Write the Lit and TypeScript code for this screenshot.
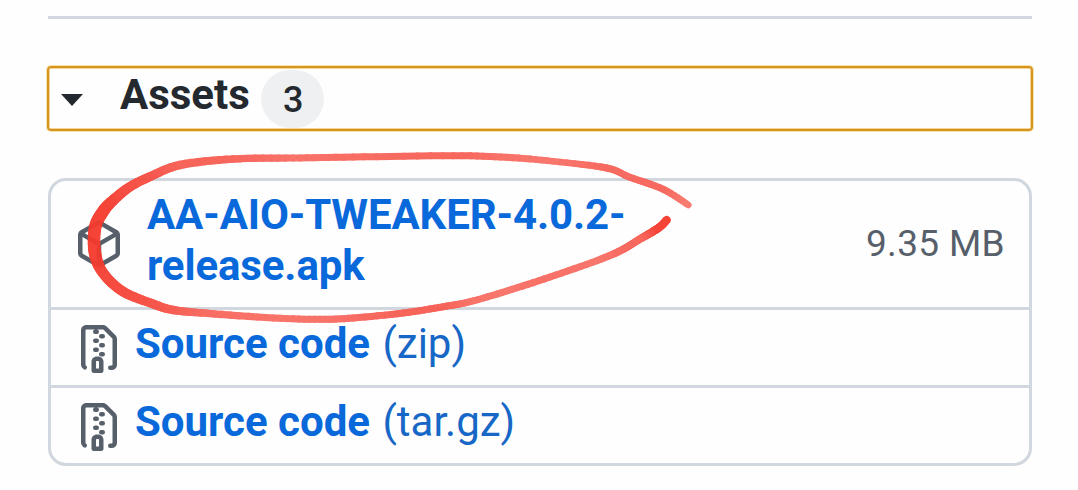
import { css, html, LitElement, svg } from "lit";
import { customElement, property } from "lit/decorators.js";

type AssetKind = "package" | "zip";

interface Asset {
  kind: AssetKind;
  name: string;
  format?: string;
  size?: string;
}

const assets: Asset[] = [
  { kind: "package", name: "AA-AIO-TWEAKER-4.0.2-release.apk", size: "9.35 MB" },
  { kind: "zip", name: "Source code", format: "(zip)" },
  { kind: "zip", name: "Source code", format: "(tar.gz)" },
];

const iconPaths: Record<AssetKind, string> = {
  package:
    "m8.878.392 5.25 3.045c.54.314.872.89.872 1.514v6.098a1.75 1.75 0 0 1-.872 1.514l-5.25 3.045a1.75 1.75 0 0 1-1.756 0l-5.25-3.045A1.75 1.75 0 0 1 1 11.049V4.951c0-.624.332-1.201.872-1.514L7.122.392a1.75 1.75 0 0 1 1.756 0ZM7.875 1.69l-4.63 2.685L8 7.133l4.755-2.758-4.63-2.685a.248.248 0 0 0-.25 0ZM2.5 5.677v5.372c0 .09.047.171.125.216l4.625 2.683V8.432Zm6.25 8.271 4.625-2.683a.25.25 0 0 0 .125-.216V5.677L8.75 8.432Z",
  zip: "M3.5 1.75v11.5c0 .09.048.173.126.217a.75.75 0 0 1-.752 1.298A1.748 1.748 0 0 1 2 13.25V1.75C2 .784 2.784 0 3.75 0h5.586c.464 0 .909.185 1.237.513l2.914 2.914c.329.328.513.773.513 1.237v8.586A1.75 1.75 0 0 1 12.25 15h-.5a.75.75 0 0 1 0-1.5h.5a.25.25 0 0 0 .25-.25V4.664a.25.25 0 0 0-.073-.177L9.513 1.573a.25.25 0 0 0-.177-.073H7.25a.75.75 0 0 1 0 1.5h-.5a.75.75 0 0 1 0-1.5h-3a.25.25 0 0 0-.25.25Zm3.75 8.75h.5c.966 0 1.75.784 1.75 1.75v3a.75.75 0 0 1-.75.75h-2.5a.75.75 0 0 1-.75-.75v-3c0-.966.784-1.75 1.75-1.75ZM6 5.25a.75.75 0 0 1 .75-.75h.5a.75.75 0 0 1 0 1.5h-.5A.75.75 0 0 1 6 5.25Zm.75 2.25h.5a.75.75 0 0 1 0 1.5h-.5a.75.75 0 0 1 0-1.5ZM8 6.75A.75.75 0 0 1 8.75 6h.5a.75.75 0 0 1 0 1.5h-.5A.75.75 0 0 1 8 6.75ZM8.75 3h.5a.75.75 0 0 1 0 1.5h-.5a.75.75 0 0 1 0-1.5ZM8 9.75A.75.75 0 0 1 8.75 9h.5a.75.75 0 0 1 0 1.5h-.5A.75.75 0 0 1 8 9.75Zm-1 2.5v2.25h1v-2.25a.25.25 0 0 0-.25-.25h-.5a.25.25 0 0 0-.25.25Z",
};

/**
 * The pen stroke, as [x, y, width, ink], where ink goes from 0 (light) to 1.
 */
const stroke: number[][] = [
  [666.7, 220, 8, 1],
  [661, 226, 8, 1],
  [653, 231.5, 8, 0.95],
  [640, 239, 7.5, 0.45],
  [621.7, 250, 7.5, 0.4],
  [596.7, 260.7, 7, 0.2],
  [550, 277, 7, 0.3],
  [506.7, 291, 7, 0.2],
  [470, 301.7, 7, 0.25],
  [443.3, 306.7, 7, 0.5],
  [403.3, 313, 7, 0.5],
  [353.3, 318, 7, 0.35],
  [320, 319.3, 7, 0.25],
  [273.3, 318, 7, 0.25],
  [206.7, 313.3, 7.5, 0.35],
  [173.3, 310, 8.5, 0.55],
  [153.3, 304, 9, 0.7],
  [123.3, 291.7, 10, 0.85],
  [103.3, 273.3, 10.5, 0.9],
  [95, 253.3, 12.5, 1],
  [95, 228, 12.5, 1],
  [103.3, 211, 12, 1],
  [114, 199.5, 10.5, 0.95],
  [130, 186.7, 9.5, 0.8],
  [150, 176.7, 9, 0.7],
  [180, 165, 8.5, 0.5],
  [233.3, 159, 7.5, 0.45],
  [293.3, 158, 7, 0.25],
  [353.3, 157, 7, 0.35],
  [453.3, 155.7, 7, 0.45],
  [506.7, 157.3, 7, 0.25],
  [553.3, 161.3, 6.5, 0.2],
  [606.7, 168, 7, 0.4],
  [630, 177.3, 7, 0.35],
  [663.3, 189.3, 7, 0.4],
  [688.3, 205, 6.5, 0.1],
];

const lightInk = [249, 125, 116];
const fullInk = [245, 58, 45];

const STEPS = 8;

// Catmull-Rom through the points, cut into short pieces
const smooth = (points: number[][]) => {
  const result: number[][] = [];
  for (let i = 0; i < points.length - 1; i++) {
    const a = points[Math.max(i - 1, 0)];
    const b = points[i];
    const c = points[i + 1];
    const d = points[Math.min(i + 2, points.length - 1)];
    for (let s = 0; s < STEPS; s++) {
      const t = s / STEPS;
      result.push(
        b.map((value, k) =>
          k > 1
            ? value + (c[k] - value) * t
            : 0.5 *
              (2 * value +
                (c[k] - a[k]) * t +
                (2 * a[k] - 5 * value + 4 * c[k] - d[k]) * t * t +
                (3 * value - a[k] - 3 * c[k] + d[k]) * t * t * t),
        ),
      );
    }
  }
  result.push(points[points.length - 1]);
  return result;
};

/**
 * This component displays the icon of an asset.
 */
@customElement("asset-icon")
export class AssetIcon extends LitElement {
  @property({ type: String }) kind: AssetKind = "zip";

  static styles = css`
    :host {
      display: block;
      flex: none;
      width: 48px;
      height: 48px;
    }

    svg {
      display: block;
      fill: #57606a;
    }
  `;

  protected render() {
    return html`<svg width="48" height="48" viewBox="0 0 16 16">
      <path d=${iconPaths[this.kind]}></path>
    </svg>`;
  }
}

/**
 * This component displays a hand-drawn circle over the page.
 */
@customElement("pen-mark")
export class PenMark extends LitElement {
  static styles = css`
    :host {
      position: absolute;
      top: 0;
      left: 0;
      pointer-events: none;
    }

    svg {
      display: block;
      opacity: 0.95;
    }

    line {
      stroke-linecap: round;
    }
  `;

  protected render() {
    const points = smooth(stroke);
    return html`<svg width="1078" height="490" viewBox="0 0 1078 490">
      ${points.slice(1).map((point, i) => {
        const [x, y, width, ink] = points[i];
        const color = lightInk.map((c, k) =>
          Math.round(c + (fullInk[k] - c) * ink),
        );
        return svg`<line
          x1=${x}
          y1=${y}
          x2=${point[0]}
          y2=${point[1]}
          stroke="rgb(${color.join(",")})"
          stroke-width=${width}
        ></line>`;
      })}
    </svg>`;
  }
}

@customElement("app-root")
export default class AppRoot extends LitElement {
  static styles = css`
    :host {
      display: block;
      position: relative;
      box-sizing: border-box;
      width: 1078px;
      height: 490px;
      padding: 16px 46px 0 48px;
      overflow: hidden;
      background: #fefefe;
      color: #24292f;
      font-family: Roboto, "Liberation Sans", sans-serif;
      font-size: 42px;
    }

    .rule {
      height: 3px;
      background: #d0d7de;
    }

    .summary {
      display: flex;
      align-items: center;
      box-sizing: border-box;
      height: 65px;
      margin: 47px -1px 0;
      padding-left: 12px;
      border: 2px solid #d6951f;
      border-radius: 4px;
      box-shadow:
        0 0 0 1px rgba(240, 185, 60, 0.4),
        inset 0 0 0 1px rgba(235, 170, 50, 0.5);
    }

    .caret {
      flex: none;
      margin: 2px 37px 0 0;
    }

    .title {
      padding-bottom: 7px;
      line-height: 50px;
      font-weight: 700;
    }

    .counter {
      box-sizing: border-box;
      width: 63px;
      height: 58px;
      margin: 1px 0 0 11px;
      padding-left: 2px;
      border-radius: 29px;
      background: #eff0f2;
      font-size: 36px;
      font-weight: 500;
      line-height: 61px;
      text-align: center;
    }

    .list {
      margin: 47px 0 0;
      padding: 0;
      border: 3px solid #d0d7de;
      border-radius: 18px;
      list-style: none;
    }

    .row {
      display: flex;
      align-items: center;
      box-sizing: border-box;
      height: 78px;
      padding: 0 24px;
      border-bottom: 3px solid #d0d7de;
    }

    .row.package {
      height: 129px;
    }

    .row:last-child {
      height: 75px;
      border-bottom: none;
    }

    .zip asset-icon {
      margin-top: 3px;
    }

    .link {
      width: 500px;
      margin-left: 12px;
      padding-bottom: 8px;
      color: #0969da;
      line-height: 50px;
    }

    .package .link {
      margin-left: 24px;
      padding-bottom: 9px;
      line-height: 51px;
      letter-spacing: -0.12px;
    }

    .name {
      font-weight: 700;
    }

    .format {
      margin-left: 2px;
      color: #1767c6;
    }

    .size {
      margin-left: auto;
      padding-bottom: 2px;
      color: #57606a;
      font-size: 37px;
      letter-spacing: 0.35px;
    }
  `;

  private renderAsset(asset: Asset) {
    return html`<li class="row ${asset.kind}">
      <asset-icon kind=${asset.kind}></asset-icon>
      <div class="link">
        <span class="name">${asset.name}</span>
        ${asset.format ? html`<span class="format">${asset.format}</span>` : ""}
      </div>
      ${asset.size ? html`<span class="size">${asset.size}</span>` : ""}
    </li>`;
  }

  protected render() {
    return html`
      <div class="rule"></div>
      <div class="summary">
        <svg class="caret" width="22" height="12" viewBox="0 0 22 12">
          <path d="M0 0h22L11 12Z" fill="#24292f"></path>
        </svg>
        <span class="title">Assets</span>
        <span class="counter">3</span>
      </div>
      <ul class="list">
        ${assets.map((asset) => this.renderAsset(asset))}
      </ul>
      <pen-mark></pen-mark>
    `;
  }
}
